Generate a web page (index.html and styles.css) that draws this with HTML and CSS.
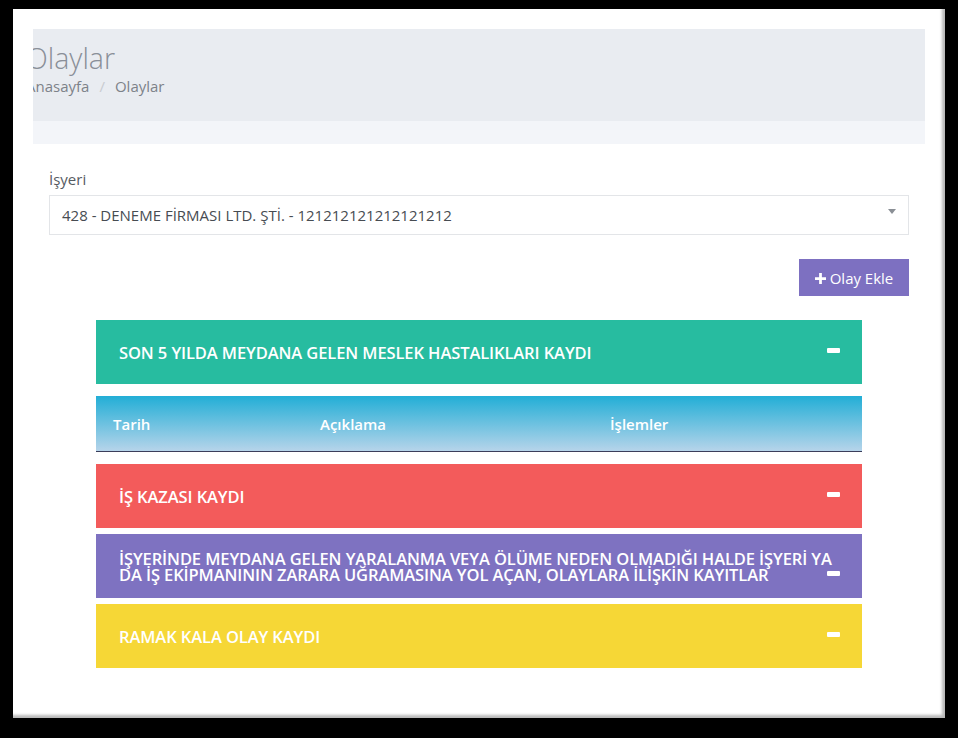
FILE: index.html
```html
<!DOCTYPE html>
<html lang="tr">
<head>
<meta charset="utf-8">
<title>Olaylar</title>
<link rel="stylesheet" href="styles.css">
</head>
<body>
<div class="frame">
  <div class="main">
    <header class="page-head">
      <div class="title-bar">
        <h1 class="title">Olaylar</h1>
        <nav class="crumbs"><span class="crumb">Anasayfa</span><span class="sep">/</span><span class="crumb current">Olaylar</span></nav>
      </div>
      <div class="sub-bar"></div>
    </header>
    <section class="content">
      <label class="field-label">İşyeri</label>
      <div class="select">
        <span class="select-text">428 - DENEME FİRMASI LTD. ŞTİ. - 121212121212121212</span>
        <span class="caret"></span>
      </div>
      <div class="actions">
        <button class="btn-add"><svg class="plus" viewBox="0 0 12 12" width="11" height="11"><path d="M4.5 0h3v4.5H12v3H7.5V12h-3V7.5H0v-3h4.5z" fill="#fff"/></svg>Olay Ekle</button>
      </div>
      <div class="panels">
        <div class="panel green">
          <span class="panel-title">SON 5 YILDA MEYDANA GELEN MESLEK HASTALIKLARI KAYDI</span>
          <span class="minus"></span>
        </div>
        <div class="table-head">
          <span class="col c1">Tarih</span>
          <span class="col c2">Açıklama</span>
          <span class="col c3">İşlemler</span>
        </div>
        <div class="panel red">
          <span class="panel-title">İŞ KAZASI KAYDI</span>
          <span class="minus"></span>
        </div>
        <div class="panel purple">
          <span class="panel-title two">İŞYERİNDE MEYDANA GELEN YARALANMA VEYA ÖLÜME NEDEN OLMADIĞI HALDE İŞYERİ YA DA İŞ EKİPMANININ ZARARA UĞRAMASINA YOL AÇAN, OLAYLARA İLİŞKİN KAYITLAR</span>
          <span class="minus"></span>
        </div>
        <div class="panel yellow">
          <span class="panel-title">RAMAK KALA OLAY KAYDI</span>
          <span class="minus"></span>
        </div>
      </div>
    </section>
  </div>
</div>
</body>
</html>
```
FILE: styles.css
```css
* { box-sizing: border-box; }
html, body { margin: 0; padding: 0; }
body {
  background: #000;
  font-family: "Open Sans", "Liberation Sans", sans-serif;
  width: 958px;
  height: 738px;
  overflow: hidden;
}
.frame {
  margin: 9px 0 0 13px;
  width: 932px;
  height: 709px;
  background: #fff;
  padding: 20px 20px 0 20px;
  box-shadow: inset -3px -3px 3px rgba(0,0,0,0.28);
}
.main { width: 892px; }
.page-head { overflow: hidden; }
.title-bar {
  background: #e9ecf1;
  height: 92px;
  padding: 11px 0 0 0;
  margin: 0;
}
.title {
  margin: 0 0 0 -7px;
  font-weight: 300;
  font-size: 28.5px;
  line-height: 36px;
  color: #8a8f98;
}
.crumbs {
  margin: -1px 0 0 -7px;
  font-size: 15px;
  line-height: 22px;
  color: #7d8289;
}
.sep { color: #c8cbd0; margin: 0 10px; }
.sub-bar { background: #f3f5f9; height: 23px; }
.content { padding: 25px 16px 0 16px; }
.field-label {
  display: block;
  font-size: 15px;
  line-height: 20px;
  color: #555b62;
  margin-bottom: 6px;
}
.select {
  height: 40px;
  border: 1px solid #e3e5e8;
  display: flex;
  align-items: center;
  padding: 0 12px;
  position: relative;
}
.select-text { font-size: 15px; color: #474c52; flex: 1; }
.caret {
  width: 0; height: 0;
  border-left: 4px solid transparent;
  border-right: 4px solid transparent;
  border-top: 5px solid #8a8f95;
  margin-top: -8px;
}
.actions { display: flex; justify-content: flex-end; margin-top: 24px; }
.btn-add {
  background: #7d70c1;
  border: 0;
  color: #fff;
  font-family: inherit;
  font-size: 15px;
  height: 37px;
  width: 110px;
  display: flex;
  align-items: center;
  justify-content: center;
  gap: 4px;
  padding: 0;
}
.plus { margin-top: 1px; }
.panels {
  margin: 24px 47px 0 47px;
  display: flex;
  flex-direction: column;
}
.panel {
  position: relative;
  height: 64px;
  display: flex;
  align-items: center;
  padding: 0 18px 0 23px;
  color: #fff;
}
.panel-title { font-weight: 600; font-size: 16.5px; letter-spacing: -0.1px; }
.panel-title.two { line-height: 16px; padding-top: 2px; }
.minus {
  position: absolute;
  right: 22px;
  top: 28px;
  width: 13px;
  height: 5px;
  background: #fff;
  border-radius: 1px;
}
.purple .minus { top: 37px; }
.green { background: #27bca0; }
.red { background: #f35b5b; margin-top: 12px; }
.purple { background: #7e72c1; margin-top: 6px; }
.yellow { background: #f6d736; margin-top: 6px; }
.table-head {
  margin-top: 12px;
  height: 56px;
  background: linear-gradient(#22aed6, #b6d4ea);
  border-bottom: 1px solid #3b3d5a;
  display: flex;
  align-items: center;
  color: #fff;
  font-weight: 600;
  font-size: 15px;
}
.col.c1 { width: 224px; padding-left: 17px; }
.col.c2 { width: 290px; }
```
